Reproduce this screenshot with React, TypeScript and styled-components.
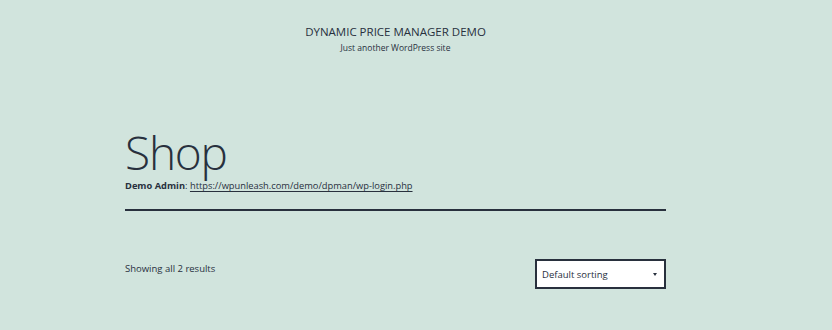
import React from 'react';
import styled, { createGlobalStyle } from 'styled-components';

const GlobalStyle = createGlobalStyle`
    html, body {
        margin: 0;
        padding: 0;
        background-color: #d1e4dd;
    }
    body {
        font-family: "Open Sans", "Noto Sans", sans-serif;
        color: #28303d;
    }
`

const Page = styled.div`
    width: 541px;
    margin-left: 125px;
    height: 330px;
    overflow: hidden;
`

const SiteHeader = styled.header`
    display: flex;
    flex-direction: column;
    align-items: center;
    padding-top: 24px;
`

const SiteTitle = styled.div`
    font-size: 11.5px;
    line-height: 16px;
    text-transform: uppercase;
`

const Tagline = styled.div`
    font-size: 8.5px;
    line-height: 12px;
    margin-top: 2px;
`

const PageTitle = styled.h1`
    margin: 75px 0 0 0;
    font-size: 46px;
    font-weight: 300;
    line-height: 46px;
    letter-spacing: -1.2px;
`

const Notice = styled.p`
    margin: 4px 0 0 0;
    font-size: 9.3px;
    line-height: 14px;
`

const NoticeLabel = styled.strong`
    font-weight: 700;
`

const NoticeLink = styled.a`
    color: #28303d;
    text-decoration: underline;
    text-underline-offset: 2px;
    text-decoration-thickness: 1px;
`

const Separator = styled.hr`
    margin: 16px 0 0 0;
    border: 0;
    height: 2px;
    background-color: #28303d;
`

const Toolbar = styled.div`
    display: flex;
    justify-content: space-between;
    align-items: flex-start;
    margin-top: 48px;
`

const ResultCount = styled.p`
    margin: 3px 0 0 0;
    font-size: 9.5px;
    line-height: 14px;
`

const SortBox = styled.div`
    box-sizing: border-box;
    width: 131px;
    height: 30px;
    border: 2px solid #28303d;
    background-color: #ffffff;
    display: flex;
    align-items: center;
    justify-content: space-between;
    padding: 0 7px 0 5px;
    font-size: 9.5px;
`

const Caret = styled.span`
    width: 0;
    height: 0;
    border-left: 2.5px solid transparent;
    border-right: 2.5px solid transparent;
    border-top: 3px solid #28303d;
`

const App: React.FC = () => {
    return (
        <>
            <GlobalStyle />
            <Page>
                <SiteHeader>
                    <SiteTitle>Dynamic Price Manager Demo</SiteTitle>
                    <Tagline>Just another WordPress site</Tagline>
                </SiteHeader>
                <PageTitle>Shop</PageTitle>
                <Notice>
                    <NoticeLabel>Demo Admin</NoticeLabel>:{' '}
                    <NoticeLink href="#">https://wpunleash.com/demo/dpman/wp-login.php</NoticeLink>
                </Notice>
                <Separator />
                <Toolbar>
                    <ResultCount>Showing all 2 results</ResultCount>
                    <SortBox>
                        <span>Default sorting</span>
                        <Caret />
                    </SortBox>
                </Toolbar>
            </Page>
        </>
    )
}

export default App;
